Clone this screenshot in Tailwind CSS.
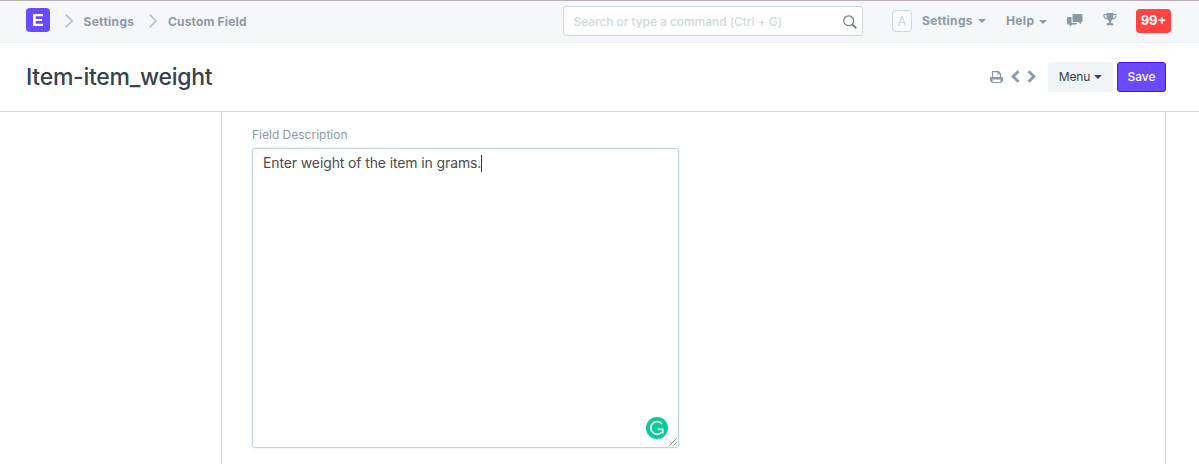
<!DOCTYPE html>
<html lang="en">
<head>
<meta charset="utf-8">
<title>Item-item_weight</title>
<script src="https://cdn.jsdelivr.net/npm/@tailwindcss/browser@4"></script>
</head>
<body class="h-[464px] w-[1199px] overflow-hidden bg-white font-['Inter',sans-serif] text-xs text-[#36414c]">
<div class="flex h-full flex-col">
  <nav class="flex h-[43px] shrink-0 border-t border-b border-t-[#b9b0ba] border-b-[#ebeef2] bg-[#f5f7fa] font-bold text-[#8d99a6]">
    <div class="mt-[7px] ml-[26px] flex h-6 w-6 shrink-0 items-center justify-center rounded bg-[#6b49ff]">
      <svg class="h-3 w-[10px]" viewBox="0 0 10 12" fill="#fff"><path d="M0 0h10v2.200H2.700V5H9v2H2.700v2.800H10V12H0Z"/></svg>
    </div>
    <svg class="mt-[13px] ml-[15px] h-[14px] w-2 shrink-0" viewBox="0 0 8 14" fill="none" stroke="#b8c2cc" stroke-width="1.7"><path d="M.7.7 7 7 .7 13.3"/></svg>
    <a class="mt-[13px] ml-[10.5px] w-[51px] shrink-0 whitespace-nowrap leading-4 tracking-[0.3px]">Settings</a>
    <svg class="mt-[13px] ml-[14.5px] h-[14px] w-2 shrink-0" viewBox="0 0 8 14" fill="none" stroke="#b8c2cc" stroke-width="1.7"><path d="M.7.7 7 7 .7 13.3"/></svg>
    <a class="mt-[13px] ml-[11px] w-[395px] shrink-0 whitespace-nowrap leading-4 tracking-[0.16px]">Custom Field</a>
    <div class="mt-[5px] flex h-[30px] w-[300px] shrink-0 items-center justify-between rounded-[3px] border border-[#d1d8dd] bg-white pr-[5px] pl-[9.5px] font-normal text-[#d1d8dd]">
      <span class="mt-px font-medium tracking-[-0.06px]">Search or type a command (Ctrl + G)</span>
      <svg class="mt-px h-[14px] w-[14px]" viewBox="0 0 14 14" fill="none" stroke="#6c7680"><circle cx="5.7" cy="5.7" r="4.9" stroke-width="1.2"/><path d="m9.3 9.3 4 4" stroke-width="1.9"/></svg>
    </div>
    <div class="mt-[9px] ml-[29px] flex h-[22px] w-5 shrink-0 items-center justify-center rounded border border-[#d1d8dd] bg-[#fafbfc] pt-px text-[13px] font-normal text-[#d1d8dd]">A</div>
    <a class="mt-3 ml-[10px] w-14 shrink-0 whitespace-nowrap leading-4 tracking-[0.3px]">Settings</a>
    <svg class="mt-[18px] h-1 w-2 shrink-0" viewBox="0 0 8 4" fill="#8d99a6"><path d="M0 0h8L4 4z"/></svg>
    <a class="mt-3 ml-5 w-[33px] shrink-0 whitespace-nowrap leading-4 tracking-[0.35px]">Help</a>
    <svg class="mt-[19px] h-1 w-2 shrink-0" viewBox="0 0 8 4" fill="#8d99a6"><path d="M0 0h8L4 4z"/></svg>
    <svg class="mt-[13px] ml-5 h-[13px] w-4 shrink-0" viewBox="0 0 16 13" fill="#8d99a6"><path d="M6.500 0h8q1 0 1 1v6q0 1-1 1h-.5v2.400L11.500 8h-5q-1 0-1-1V1q0-1 1-1Z"/><path d="M4.500 3v5q0 1.100 1.100 1.100H10q0 1.400-1 1.400H5.300L2.800 12.800v-2.300H1q-1 0-1-1V4q0-1 1-1Z"/></svg>
    <svg class="mt-3 ml-[20px] h-[13px] w-[14px] shrink-0" viewBox="0 0 14 13" fill="#8d99a6"><path d="M3.500 0h7v1.100H13.500v2.100Q13 6 9.300 6.600 8 7.500 8 9.500q0 .8 1.700.8.800.2.800 1.900h-7q0-1.700.8-1.900Q6 10.300 6 9.500q0-2-1.300-2.900Q1 6 .5 3.200V1.100h3ZM3.500 2h-2v1.100q.3 1.600 2.500 2.300Q3.400 4.200 3.500 2Zm7 0q.1 2.200-.5 3.400 2.200-.7 2.500-2.300V2Z"/></svg>
    <div class="mt-2 ml-[19px] flex h-6 w-[35px] shrink-0 items-center justify-center rounded bg-[#ff4242] text-[13px] text-white">99+</div>
  </nav>
  <header class="flex h-[69px] shrink-0 border-b border-[#d1d8dd]">
    <h1 class="mt-[19px] ml-[26px] w-[964px] shrink-0 text-[23px] leading-[30px] font-medium tracking-[-0.27px]">Item-item_weight</h1>
    <svg class="mt-7 h-[13px] w-[13px] shrink-0" viewBox="0 0 13 13" fill="none" stroke="#8d99a6"><path d="M2.500 6V.700h6L10.500 2.700V6M8 .7V3h2.500" stroke-width="1.200"/><path d="M0 10.500V7Q0 6 1 6h11q1 0 1 1v3.500h-2V8.500H2v2Z" fill="#8d99a6" stroke="none"/><path d="M2 8.500v3h9V8.500" stroke-width="1.200"/></svg>
    <svg class="mt-[27px] ml-2 h-[13px] w-[9px] shrink-0" viewBox="0 0 9 13" fill="none" stroke="#8d99a6" stroke-width="2.800"><path d="M7.500 1.200 2 6.500 7.500 11.800"/></svg>
    <svg class="mt-[27px] ml-[7px] h-[13px] w-[9px] shrink-0" viewBox="0 0 9 13" fill="none" stroke="#8d99a6" stroke-width="2.800"><path d="M1.500 1.200 7 6.500 1.500 11.800"/></svg>
    <button class="mt-[19px] ml-3 flex h-[30px] w-[65px] shrink-0 items-center justify-center gap-1 rounded-[3px] bg-[#f0f4f7] tracking-[-0.1px]">Menu<svg class="h-1 w-2" viewBox="0 0 8 4" fill="#36414c"><path d="M0 0h8L4 4z"/></svg></button>
    <button class="mt-[19px] ml-1 h-[30px] w-[49px] shrink-0 rounded-[3px] border border-[#4d0cff] bg-[#6b49ff] font-medium text-white">Save</button>
  </header>
  <main class="ml-[221px] w-[945px] grow border-x border-[#d1d8dd] pt-[15px] pl-[30px]">
    <label class="block h-[21px] leading-4 text-[#8d99a6]">Field Description</label>
    <div class="flex h-[300px] w-[427px] flex-col justify-between rounded-[3px] border border-[#c4d0dc] shadow-[0_0_2px_rgba(141,170,200,0.35)]">
      <div class="flex items-center pt-[5px] pl-[10px] text-sm leading-[18px] tracking-[-0.12px] text-[#4c4c4c]"><span class="whitespace-nowrap">Enter weight of the item in grams.</span><span class="h-[17px] w-px bg-[#333]"></span></div>
      <div class="flex items-end justify-end">
        <svg class="mr-px mb-[8px] h-[22px] w-[22px]" viewBox="0 0 22 22"><circle cx="11" cy="11" r="11" fill="#0bc998"/><path d="M16 7A6.300 6.300 0 1 0 15.500 15.500M11.800 12.400h4.900v4.200" fill="none" stroke="#fff" stroke-width="1.700"/></svg>
        <svg class="mr-[1px] mb-[1px] h-2 w-2" viewBox="0 0 8 8" fill="none" stroke="#777" stroke-width=".9"><path d="M.5 7.500l7-7M4.500 7.500l3-3"/></svg>
      </div>
    </div>
  </main>
</div>
</body>
</html>
